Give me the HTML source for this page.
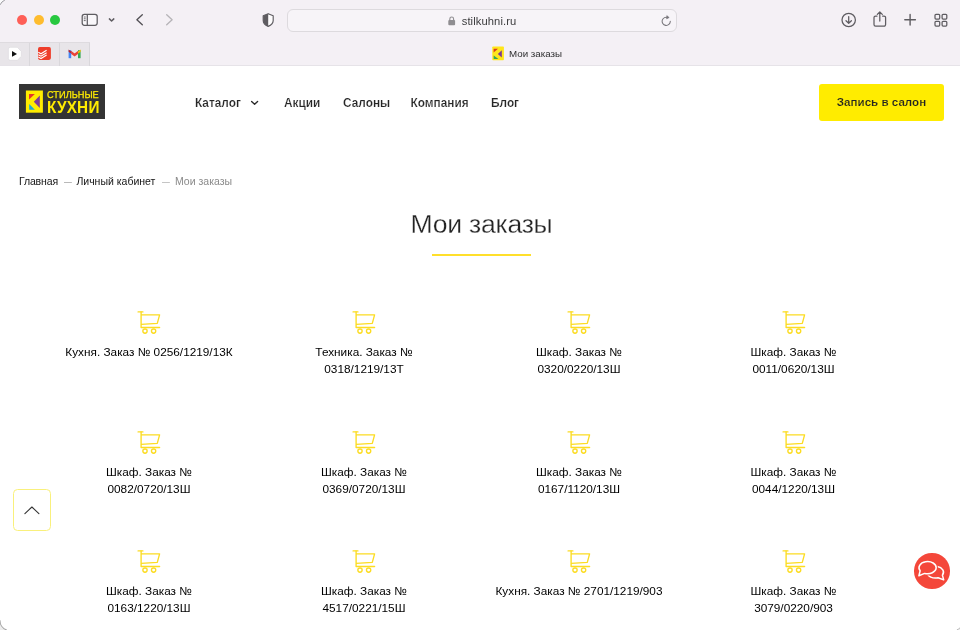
<!DOCTYPE html>
<html lang="ru">
<head>
<meta charset="utf-8">
<title>Мои заказы</title>
<style>
*{margin:0;padding:0;box-sizing:border-box}
html,body{width:960px;height:630px;overflow:hidden;background:#fff}
body{position:relative;font-family:"Liberation Sans",sans-serif;color:#222;-webkit-font-smoothing:antialiased}
#root{position:absolute;left:0;top:0;width:960px;height:630px;will-change:transform}
.abs{position:absolute}
/* ---------- browser chrome ---------- */
#chrome{position:absolute;left:0;top:0;width:960px;height:66px;background:#f4f0f5;border-bottom:1px solid #e6e3e8}
#pins{position:absolute;left:0;top:42px;width:90px;height:23px;background:#e8e5e9;border-top:1px solid #dedbdf}
#pins i{position:absolute;top:0;width:1px;height:23px;background:#d9d7db}
.dot{position:absolute;top:15px;width:10.4px;height:10.4px;border-radius:50%}
#url{position:absolute;left:287px;top:8.5px;width:390px;height:23px;border:1px solid #dddade;border-radius:6px;background:#f7f4f8}
#urltxt{position:absolute;left:461.7px;top:13.5px;font-size:11.2px;line-height:14px;color:#3c3c3e;letter-spacing:0.1px}
#tabtxt{position:absolute;left:509px;top:47px;font-size:9.75px;line-height:14px;color:#2e2e30}
/* ---------- page ---------- */
#logo{position:absolute;left:19px;top:84px;width:86px;height:35px;background:#343434}
#logo .t1{position:absolute;left:27.8px;-webkit-text-stroke:.25px #ffec00;top:6.4px;font-size:9.9px;line-height:11px;color:#ffec00;text-rendering:geometricPrecision;transform:scaleX(.935);transform-origin:0 0;white-space:nowrap;letter-spacing:0}
#logo .t2{position:absolute;left:27.8px;top:14.8px;font-size:16px;line-height:17px;font-weight:bold;color:#ffec00;letter-spacing:.25px;transform:scaleX(.955);transform-origin:0 0;white-space:nowrap}
.nav{position:absolute;top:96px;font-size:11.85px;line-height:14px;font-weight:bold;color:#262626;white-space:nowrap;-webkit-text-stroke:.2px #fff;letter-spacing:0}
#btn{position:absolute;left:819px;top:84.2px;width:125px;height:37px;background:#ffec00;border-radius:3px;font-size:11.6px;font-weight:bold;line-height:36.4px;text-align:center;color:#222;-webkit-text-stroke:.18px #ffec00}
.bc{position:absolute;top:174px;font-size:10.5px;line-height:14px;color:#151515;white-space:nowrap}
#h1{position:absolute;left:0;top:207px;width:963px;text-align:center;font-size:26.6px;line-height:34px;font-weight:normal;color:#242424;letter-spacing:-.25px;-webkit-text-stroke:.3px #fff}
#hl{position:absolute;left:432px;top:254px;width:99px;height:2px;background:#ffdf2b}
.it{position:absolute;width:215px;text-align:center;font-size:11.8px;line-height:17px;color:#000}
.it svg{display:block;margin:0 auto 9px}
#up{position:absolute;left:12.7px;top:488.6px;width:38.2px;height:42.9px;border:1.2px solid #f9f07c;border-radius:4.5px;background:#fff}
#chat{position:absolute;left:914.2px;top:553.4px;width:35.6px;height:35.6px;border-radius:50%;background:#f4473a}
</style>
</head>
<body>
<div id="root">
<div id="chrome">
  <div class="dot" style="left:16.8px;background:#fe5f57"></div>
  <div class="dot" style="left:33.5px;background:#febc2e"></div>
  <div class="dot" style="left:49.9px;background:#28c840"></div>
  <div id="url"></div>
  <div id="urltxt">stilkuhni.ru</div>
  <div id="pins"><i style="left:29px"></i><i style="left:59px"></i><i style="left:89px"></i></div>
  <div id="tabtxt">Мои заказы</div>

  <svg class="abs" style="left:0;top:0" width="960" height="66" viewBox="0 0 960 66" fill="none">
    <path d="M0 0H4.4A10 10 0 0 0 0 4.4Z" fill="#fbfbfc"/><path d="M0 4.9A10 10 0 0 1 4.9 0" stroke="#9d9da2" stroke-width="1"/>
    <!-- sidebar -->
    <g stroke="#5e5c61" stroke-width="1.25" stroke-linecap="round" stroke-linejoin="round">
      <rect x="82.2" y="14.4" width="15" height="10.9" rx="2.2" fill="#f9f7fa"/>
      <path d="M87.3 14.5V25.2"/>
      <path d="M84.2 17H85.3M84.2 18.8H85.3M84.2 20.6H85.3" stroke-width="0.9"/>
      <path d="M109.4 18.9L111.6 21L113.8 18.9" stroke-width="1.5"/>
    </g>
    <path d="M142.3 14.8L136.9 19.8L142.3 24.8" stroke="#535156" stroke-width="1.35" stroke-linecap="round" stroke-linejoin="round"/>
    <path d="M166.7 14.8L172.1 19.8L166.7 24.8" stroke="#b6b4b8" stroke-width="1.35" stroke-linecap="round" stroke-linejoin="round"/>
    <!-- shield -->
    <path d="M268.2 13.7L263.2 15.7V20.6C263.2 23.2 265.2 25.2 268.2 26.4C271.2 25.2 273.2 23.2 273.2 20.6V15.7Z" fill="#fdfcfd" stroke="#5e5c61" stroke-width="1.15" stroke-linejoin="round"/>
    <path d="M268.2 13.7L263.2 15.7V20.6C263.2 23.2 265.2 25.2 268.2 26.4Z" fill="#5e5c61"/>
    <!-- lock -->
    <rect x="448.3" y="20" width="6.8" height="5.2" rx="1" fill="#8f8d91"/>
    <path d="M449.8 20.3V18.9a1.9 1.9 0 0 1 3.8 0V20.3" stroke="#8f8d91" stroke-width="1.1"/>
    <!-- reload -->
    <g transform="translate(0.9 0.9)"><path d="M669.4 20.4a4.1 4.1 0 1 1 -2.4 -3.7" stroke="#77757a" stroke-width="1.05" stroke-linecap="round"/>
    <path d="M665.9 14.7L668.3 16.6L665.7 18Z" fill="#77757a" stroke="#77757a" stroke-width=".5" stroke-linejoin="round"/></g>
    <!-- download -->
    <g stroke="#5e5c61" stroke-width="1.25" stroke-linecap="round" stroke-linejoin="round">
      <circle cx="848.7" cy="20" r="6.7"/>
      <path d="M848.7 16.6V23.2M846 20.7L848.7 23.3L851.4 20.7"/>
      <!-- share -->
      <path d="M877 16H875.6a1.6 1.6 0 0 0 -1.6 1.6V24.6a1.6 1.6 0 0 0 1.6 1.6H884a1.6 1.6 0 0 0 1.6 -1.6V17.6a1.6 1.6 0 0 0 -1.6 -1.6H882.6"/>
      <path d="M879.8 21V12.2M877.3 14.4L879.8 12L882.3 14.4"/>
      <!-- plus -->
      <path d="M904.8 19.8H915.4M910.1 14.5V25.1" stroke-width="1.4"/>
      <!-- grid -->
      <rect x="935" y="14.3" width="4.7" height="4.7" rx="1"/>
      <rect x="942.1" y="14.3" width="4.7" height="4.7" rx="1"/>
      <rect x="935" y="21.3" width="4.7" height="4.7" rx="1"/>
      <rect x="942.1" y="21.3" width="4.7" height="4.7" rx="1"/>
    </g>
    <!-- pinned: play -->
    <path d="M10.2 47.3H17.4L21.3 51.4V56.2L17.4 60.3H10.2a1.8 1.8 0 0 1 -1.8 -1.8V49.1a1.8 1.8 0 0 1 1.8 -1.8Z" fill="#fff" stroke="#d9d7db" stroke-width="0.6"/>
    <path d="M12 51.1L17 53.9L12 56.7Z" fill="#111"/>
    <!-- pinned: todoist -->
    <rect x="38" y="47.1" width="12.9" height="12.8" rx="1.8" fill="#ee3d2a"/>
    <path d="M38.3 52.3L41 53.8L46.6 50.3M38.3 54.7L41 56.2L46.6 52.7M38.3 57.1L41 58.5L46.6 55.1" stroke="#fff" stroke-width="1.15"/>
    <!-- pinned: gmail -->
    <path d="M69.9 51.4L74.6 55L79.3 51.4" stroke="#ea4335" stroke-width="2.5" stroke-linejoin="miter"/>
    <path d="M69.9 58.2V50.2" stroke="#4285f4" stroke-width="2.6"/>
    <path d="M79.3 58.2V50.2" stroke="#34a853" stroke-width="2.6"/>
    <path d="M68.6 49.6L71.3 51.7L70.6 53.2L68.6 51.8Z" fill="#c5221f"/>
    <path d="M80.6 49.6L77.9 51.7L78.2 53.4L80.6 51.8Z" fill="#fbbc04"/>
    <!-- favicon -->
    <rect x="492.3" y="46.4" width="11.6" height="13.8" rx="0.8" fill="#ffe61a"/>
    <path d="M493.6 48.8H498L493.6 52.5Z" fill="#dc3a20"/>
    <path d="M501.8 50.2V57.5L497.8 53.9Z" fill="#7b3a92"/>
    <path d="M493.7 55.6V59.1H498.4Z" fill="#2fa65a"/>
  </svg>
</div>

<div id="logo"><svg class="abs" style="left:0;top:0" width="86" height="35" viewBox="0 0 86 35">
<rect x="6.9" y="6.5" width="17" height="22.2" fill="#ffec00"/>
<path d="M10 10H15.9L10 15.6Z" fill="#e5352b"/>
<path d="M20.8 11.6V24L14.8 17.7Z" fill="#7c3c98"/>
<path d="M10.2 20.1V25.7H15.9Z" fill="#1fa9d0"/>
</svg><div class="t1">СТИЛЬНЫЕ</div><div class="t2">КУХНИ</div></div>
<div class="nav" style="left:195px">Каталог</div>
<svg class="abs" style="left:249px;top:98px" width="12" height="10" viewBox="0 0 12 10" fill="none"><path d="M2.6 3.4L5.6 6.2L8.6 3.4" stroke="#2b2b2b" stroke-width="1.4" stroke-linecap="round" stroke-linejoin="round"/></svg>
<div class="nav" style="left:284px">Акции</div>
<div class="nav" style="left:343px">Салоны</div>
<div class="nav" style="left:410.5px">Компания</div>
<div class="nav" style="left:491px">Блог</div>
<div id="btn">Запись в салон</div>

<div class="bc" style="left:19px;letter-spacing:-.15px">Главная</div>
<div class="bc" style="left:63.5px;color:#a5a5a5;transform:scaleX(1.35);transform-origin:0 0">–</div>
<div class="bc" style="left:76.4px">Личный кабинет</div>
<div class="bc" style="left:162px;color:#b5b5b5;transform:scaleX(1.35);transform-origin:0 0">–</div>
<div class="bc" style="left:175px;color:#8a8a8a">Мои заказы</div>

<h1 id="h1">Мои заказы</h1>
<div id="hl"></div>

<div id="grid">
<svg width="0" height="0" style="position:absolute"><defs><symbol id="cart" viewBox="0 0 24 24"><g fill="none" stroke="#fcdc22" stroke-width="1.35" stroke-linecap="round" stroke-linejoin="round"><path d="M1 0.9H6" stroke-width="1.1"/><path d="M4.1 0.9V16.5H22.6M4.1 3.8H22.6L20.3 12.4L4.1 13.4"/><circle cx="8" cy="20.1" r="2.15"/><circle cx="16.6" cy="20.1" r="2.15"/></g></symbol></defs></svg>
<div class="it" style="left:41.5px;top:311px"><svg width="24" height="24"><use href="#cart"/></svg>Кухня. Заказ № 0256/1219/13К</div>
<div class="it" style="left:256.5px;top:311px"><svg width="24" height="24"><use href="#cart"/></svg>Техника. Заказ №<br>0318/1219/13Т</div>
<div class="it" style="left:471.5px;top:311px"><svg width="24" height="24"><use href="#cart"/></svg>Шкаф. Заказ №<br>0320/0220/13Ш</div>
<div class="it" style="left:686.0px;top:311px"><svg width="24" height="24"><use href="#cart"/></svg>Шкаф. Заказ №<br>0011/0620/13Ш</div>
<div class="it" style="left:41.5px;top:430.5px"><svg width="24" height="24"><use href="#cart"/></svg>Шкаф. Заказ №<br>0082/0720/13Ш</div>
<div class="it" style="left:256.5px;top:430.5px"><svg width="24" height="24"><use href="#cart"/></svg>Шкаф. Заказ №<br>0369/0720/13Ш</div>
<div class="it" style="left:471.5px;top:430.5px"><svg width="24" height="24"><use href="#cart"/></svg>Шкаф. Заказ №<br>0167/1120/13Ш</div>
<div class="it" style="left:686.0px;top:430.5px"><svg width="24" height="24"><use href="#cart"/></svg>Шкаф. Заказ №<br>0044/1220/13Ш</div>
<div class="it" style="left:41.5px;top:550px"><svg width="24" height="24"><use href="#cart"/></svg>Шкаф. Заказ №<br>0163/1220/13Ш</div>
<div class="it" style="left:256.5px;top:550px"><svg width="24" height="24"><use href="#cart"/></svg>Шкаф. Заказ №<br>4517/0221/15Ш</div>
<div class="it" style="left:471.5px;top:550px"><svg width="24" height="24"><use href="#cart"/></svg>Кухня. Заказ № 2701/1219/903</div>
<div class="it" style="left:686.0px;top:550px"><svg width="24" height="24"><use href="#cart"/></svg>Шкаф. Заказ №<br>3079/0220/903</div>
</div>

<svg class="abs" style="left:0;top:618px" width="12" height="12" viewBox="0 0 12 12" fill="none"><path d="M0 12H6.6A10 10 0 0 1 0 2.6Z" fill="#ededed"/><path d="M0 2.2A10 10 0 0 0 6.8 12" stroke="#a6a6a6" stroke-width="1.1"/></svg>
<svg class="abs" style="left:950px;top:620px" width="10" height="10" viewBox="0 0 10 10" fill="none"><path d="M10 10H7.4A10 10 0 0 0 10 8.2Z" fill="#ededed"/><path d="M6.8 10A10 10 0 0 0 10 7.8" stroke="#b4b4b4" stroke-width="1"/></svg>
<div id="up"><svg class="abs" style="left:0;top:0" width="36" height="41" viewBox="0 0 36 41" fill="none"><path d="M10.9 23.7L17.9 17L24.9 23.7" stroke="#333" stroke-width="1.1" stroke-linecap="round" stroke-linejoin="round"/></svg></div>
<div id="chat"><svg class="abs" style="left:0;top:0" width="35.6" height="35.6" viewBox="0 0 35.6 35.6" fill="none" stroke="#fff" stroke-width="1.5" stroke-linejoin="round" stroke-linecap="round">
<path d="M28.4 22.15L29.7 26.9L24.1 24.74A8.2 5.9 0 1 1 28.4 22.15Z"/>
<path d="M10.66 20.43L4.9 22.7L6.15 17.75A8.6 6.1 0 1 1 10.66 20.43Z" fill="#f4473a" stroke="#f4473a" stroke-width="3.4"/>
<path d="M10.66 20.43L4.9 22.7L6.15 17.75A8.6 6.1 0 1 1 10.66 20.43Z" fill="#f4473a"/>
</svg></div>
</div>
</body>
</html>
